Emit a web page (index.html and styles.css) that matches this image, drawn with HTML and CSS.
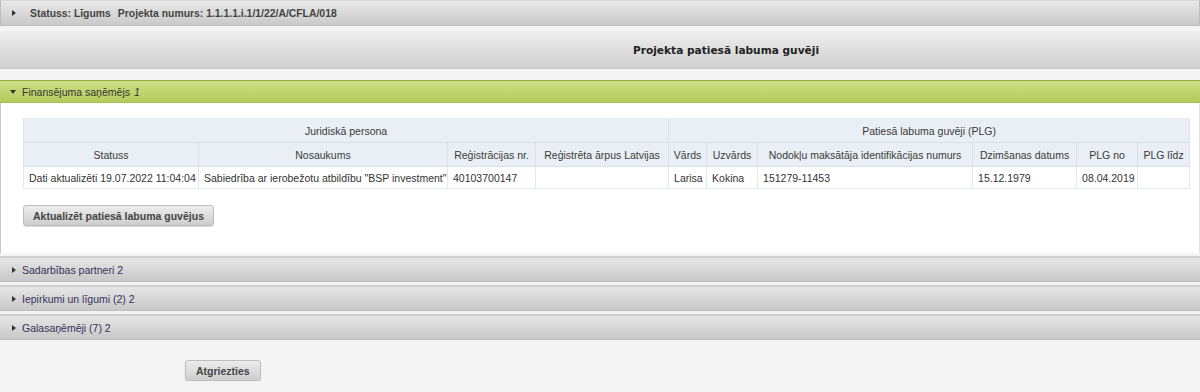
FILE: index.html
```html
<!DOCTYPE html>
<html lang="lv">
<head>
    <meta charset="UTF-8">
    <title>Projekta patiesā labuma guvēji</title>
    <link rel="stylesheet" href="styles.css">
</head>
<body>
    <div class="topbar">
        <span class="arrow-right"></span>
        <b>Statuss: Līgums</b>
        <b class="proj">Projekta numurs: 1.1.1.1.i.1/1/22/A/CFLA/018</b>
    </div>

    <div class="titlebar">Projekta patiesā labuma guvēji</div>

    <!-- Finansejuma sanemejs -->
    <div class="section open">
        <div class="section-head green">
            <span class="arrow-down"></span>
            Finansējuma saņēmējs <i>1</i>
        </div>
        <div class="section-body">
            <table class="plg">
                <colgroup>
                    <col style="width:175px"><col style="width:249px"><col style="width:88px"><col style="width:133px">
                    <col style="width:38px"><col style="width:51px"><col style="width:215px"><col style="width:104px">
                    <col style="width:61px"><col style="width:52px">
                </colgroup>
                <tr class="h1">
                    <th colspan="4">Juridiskā persona</th>
                    <th colspan="6">Patiesā labuma guvēji (PLG)</th>
                </tr>
                <tr class="h2">
                    <th>Statuss</th>
                    <th>Nosaukums</th>
                    <th>Reģistrācijas nr.</th>
                    <th>Reģistrēta ārpus Latvijas</th>
                    <th>Vārds</th>
                    <th>Uzvārds</th>
                    <th>Nodokļu maksātāja identifikācijas numurs</th>
                    <th>Dzimšanas datums</th>
                    <th>PLG no</th>
                    <th>PLG līdz</th>
                </tr>
                <tr>
                    <td>Dati aktualizēti 19.07.2022 11:04:04</td>
                    <td>Sabiedrība ar ierobežotu atbildību "BSP investment"</td>
                    <td>40103700147</td>
                    <td></td>
                    <td>Larisa</td>
                    <td>Kokina</td>
                    <td>151279-11453</td>
                    <td>15.12.1979</td>
                    <td>08.04.2019</td>
                    <td></td>
                </tr>
            </table>
            <button class="btn">Aktualizēt patiesā labuma guvējus</button>
        </div>
    </div>

    <div class="section">
        <div class="section-head"><span class="arrow-right"></span>Sadarbības partneri 2</div>
    </div>
    <div class="section">
        <div class="section-head"><span class="arrow-right"></span>Iepirkumi un līgumi (2) 2</div>
    </div>
    <div class="section">
        <div class="section-head"><span class="arrow-right"></span>Galasaņēmēji (7) 2</div>
    </div>

    <div class="bottom">
        <button class="btn">Atgriezties</button>
    </div>
</body>
</html>
```

FILE: styles.css
```css
body {
    margin: 0;
    background: #f4f4f4;
    font-family: "Liberation Sans", Arial, sans-serif;
    font-size: 10.5px;
    color: #333;
}
.topbar {
    height: 24px;
    display: flex;
    align-items: center;
    padding-left: 11px;
    background: linear-gradient(#e9e9e9, #c9c9c9);
    border: 1px solid #bdbdbd;
    border-top-color: #d8d8d8;
    color: #444;
    font-size: 10.4px;
}
.topbar b {
    margin-left: 8px;
}
.topbar .proj {
    margin-left: 7px;
}
.arrow-right {
    display: inline-block;
    width: 0;
    height: 0;
    border-top: 3px solid transparent;
    border-bottom: 3px solid transparent;
    border-left: 4px solid #333;
    margin-right: 6px;
}
.arrow-down {
    display: inline-block;
    width: 0;
    height: 0;
    border-left: 3px solid transparent;
    border-right: 3px solid transparent;
    border-top: 4px solid #333;
    margin-right: 6px;
}
.titlebar {
    margin-top: 5px;
    height: 37px;
    display: flex;
    align-items: center;
    justify-content: center;
    padding-left: 252px;
    background: linear-gradient(#efefef, #cfcfcf);
    border-bottom: 1px solid #c4c4c4;
    font-family: "DejaVu Sans", Verdana, sans-serif;
    font-weight: bold;
    font-size: 10.6px;
    color: #222;
}
.section {
    margin-top: 3px;
}
.section.open {
    margin-top: 11px;
}
.section-head {
    height: 23px;
    display: flex;
    align-items: center;
    padding-left: 12px;
    background: linear-gradient(#e6e6e6, #c8c8c8);
    border-top: 2px solid #cfcfcf;
    border-bottom: 1px solid #bcbcbc;
    color: #35305a;
}
.section-head .arrow-right {
    margin-right: 6px;
}
.section-head.green {
    height: 21px;
    padding-left: 10px;
    background: linear-gradient(#cddf85, #b4cb5c);
    border-top: 1px solid #96ad45;
    border-bottom: 1px solid #a9c052;
    color: #333;
}
.section-head i {
    margin-left: 4px;
}
.section-body {
    background: #fff;
    border-left: 1px solid #c8c8c8;
    border-right: 1px solid #e0e0e0;
    padding: 15px 0 27px 22px;
}
.plg {
    border-collapse: collapse;
    table-layout: fixed;
    width: 1166px;
    font-size: 10.5px;
}
.plg th {
    background: #e9eff4;
    font-weight: normal;
    color: #3a3a3a;
    border: 1px solid #d9e1e8;
    height: 23px;
    padding: 0 4px;
    white-space: nowrap;
}
.plg .h1 th {
    border-top-color: #e9eff4;
}
.plg td {
    border: 1px solid #e3e8ec;
    height: 21px;
    padding: 0 5px;
    white-space: nowrap;
    color: #333;
}
.btn {
    display: block;
    margin-top: 16px;
    height: 21px;
    padding: 0 9px;
    background: linear-gradient(#ededed, #cdcdcd);
    border: 1px solid #bdbdbd;
    border-radius: 3px;
    font-family: "Liberation Sans", Arial, sans-serif;
    font-size: 10.5px;
    font-weight: bold;
    color: #444;
    box-shadow: 0 1px 1px rgba(0, 0, 0, 0.15);
}
.bottom {
    padding: 0 0 0 185px;
}
.bottom .btn {
    margin-top: 20px;
    padding: 0 10px;
}
```
